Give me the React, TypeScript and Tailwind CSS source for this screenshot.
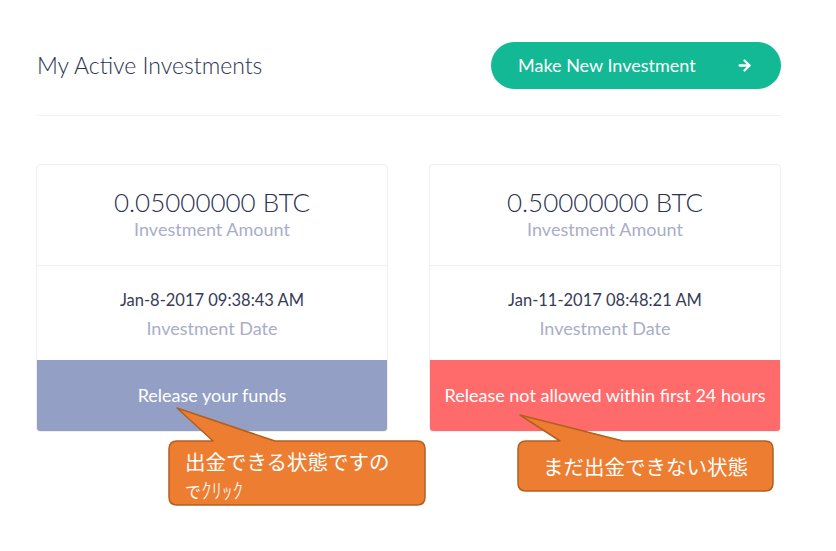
import React from "react";
import { ArrowRight } from "lucide-react";

type Inv = { amount: string; date: string; action: string; bg: string };

const items: Inv[] = [
  { amount: "0.05000000 BTC", date: "Jan-8-2017 09:38:43 AM", action: "Release your funds", bg: "bg-[#939fc4]" },
  { amount: "0.50000000 BTC", date: "Jan-11-2017 08:48:21 AM", action: "Release not allowed within first 24 hours", bg: "bg-[#ff6b6b]" },
];

function Card({ it }: { it: Inv }) {
  return (
    <div className="flex flex-col rounded-[4px] border border-[#efeff3] bg-white overflow-hidden h-[268px]">
      <div className="flex flex-col items-center pt-[21px] h-[101px] border-b border-[#f0f0f4]">
        <div className="text-[26px] leading-[32px] font-light text-[#2c3152]">{it.amount}</div>
        <div className="text-[18px] leading-[22px] text-[#a9adc8]">Investment Amount</div>
      </div>
      <div className="flex flex-col items-center pt-[23px] h-[94px]">
        <div className="text-[16.5px] leading-[22px] text-[#363b58]">{it.date}</div>
        <div className="text-[18px] leading-[22px] text-[#a9adc8] mt-[6px]">Investment Date</div>
      </div>
      <div className={`flex flex-1 items-center justify-center text-white text-[18px] ${it.bg}`}>
        {it.action}
      </div>
    </div>
  );
}

export default function App() {
  return (
    <div className="relative w-[836px] h-[551px] bg-white overflow-hidden" style={{ fontFamily: "Lato, 'Noto Sans', sans-serif" }}>
      <div className="ml-[36px] w-[745px] pt-[42px]">
        <div className="flex items-center justify-between h-[47px]">
          <h1 className="text-[23px] font-light text-[#2d3250] pl-[1px]">My Active Investments</h1>
          <button className="flex items-center justify-between w-[290px] h-[47px] rounded-full bg-[#13b894] pl-[27px] pr-[28px] text-white text-[18px]">
            <span>Make New Investment</span>
            <ArrowRight size={17} strokeWidth={3.2} />
          </button>
        </div>
        <div className="mt-[26px] h-px bg-[#f1f1f4]" />
        <div className="mt-[48px] grid grid-cols-2 gap-[41px]">
          {items.map((it, i) => (
            <Card key={i} it={it} />
          ))}
        </div>
      </div>

      <svg className="absolute left-0 top-0 pointer-events-none" width="836" height="551" viewBox="0 0 836 551">
        <path
          d="M 177 408 L 275 441 L 417 441 Q 425 441 425 449 L 425 497 Q 425 505 417 505 L 177 505 Q 169 505 169 497 L 169 449 Q 169 441 177 441 L 213 441 Z"
          fill="#ed7d31"
          stroke="#b0601f"
          strokeWidth="1.5"
          strokeLinejoin="round"
        />
        <path
          d="M 520 415 L 623 441 L 765 441 Q 773 441 773 449 L 773 483 Q 773 491 765 491 L 526 491 Q 518 491 518 483 L 518 449 Q 518 441 526 441 L 560 441 Z"
          fill="#ed7d31"
          stroke="#b0601f"
          strokeWidth="1.5"
          strokeLinejoin="round"
        />
      </svg>
      <div
        className="absolute left-[185px] top-[448px] text-white flex flex-col gap-[5px]"
        style={{ fontFamily: "'Noto Sans CJK JP', sans-serif" }}
      >
        <div className="text-[20.5px] leading-[26px]">出金できる状態ですの</div>
        <div className="flex items-end h-[21px]">
          <span className="inline-block text-[16px] leading-[18px]">で</span>
          <span className="inline-block text-[21px] leading-[21px] font-light">ｸﾘｯｸ</span>
        </div>
      </div>
      <div
        className="absolute left-[518px] top-[441px] w-[255px] h-[50px] flex items-center justify-center text-white text-[20.5px]"
        style={{ fontFamily: "'Noto Sans CJK JP', sans-serif" }}
      >
        まだ出金できない状態
      </div>
    </div>
  );
}
